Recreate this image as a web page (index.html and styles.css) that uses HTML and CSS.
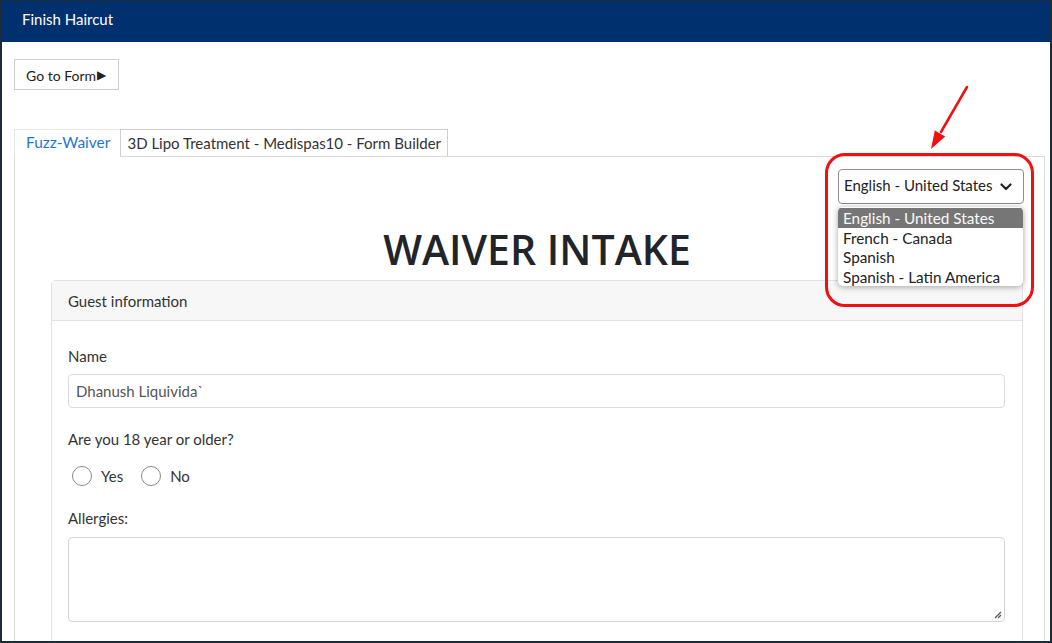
FILE: index.html
```html
<!DOCTYPE html>
<html>
<head>
<meta charset="utf-8">
<link rel="stylesheet" href="styles.css">
</head>
<body>
<div class="frame">
  <header class="topbar">Finish Haircut</header>
  <main class="content">
    <button class="goto">Go to Form<span class="tri">&#9654;</span></button>
    <div class="tabs">
      <div class="tab active">Fuzz-Waiver</div>
      <div class="tab">3D Lipo Treatment - Medispas10 - Form Builder</div>
    </div>
    <section class="panel">
      <div class="lang-row">
        <div class="select">
          <span>English - United States</span>
          <svg class="chev" width="12" height="8" viewBox="0 0 12 8"><path d="M1.5 1.5 L6 6 L10.5 1.5" fill="none" stroke="#222" stroke-width="2.2" stroke-linecap="round" stroke-linejoin="round"/></svg>
        </div>
      </div>
      <ul class="dropdown">
        <li class="sel">English - United States</li>
        <li>French - Canada</li>
        <li>Spanish</li>
        <li>Spanish - Latin America</li>
      </ul>
      <div class="highlight"></div>
      <svg class="arrow" width="44" height="70" viewBox="0 0 44 70">
        <line x1="38" y1="2" x2="12" y2="47" stroke="#f01010" stroke-width="2.5" stroke-linecap="round"/>
        <polygon points="2,64 16.2,51.4 5.8,45.4" fill="#f01010"/>
      </svg>
      <h1 class="title">WAIVER INTAKE</h1>
      <div class="card">
        <div class="card-head">Guest information</div>
        <div class="card-body">
          <label class="lbl">Name</label>
          <div class="input">Dhanush Liquivida`</div>
          <label class="lbl q">Are you 18 year or older?</label>
          <div class="radios">
            <span class="radio"></span><span class="rtext">Yes</span>
            <span class="radio"></span><span class="rtext">No</span>
          </div>
          <label class="lbl q2">Allergies:</label>
          <div class="textarea">
            <svg class="grip" width="9" height="9" viewBox="0 0 9 9"><path d="M8 2 L2 8 M8 5 L5 8" stroke="#555" stroke-width="1.2"/></svg>
          </div>
        </div>
      </div>
    </section>
  </main>
</div>
</body>
</html>
```

FILE: styles.css
```css
* { box-sizing: border-box; }
html, body { margin: 0; padding: 0; }
body {
  font-family: Lato, "Open Sans", sans-serif;
  color: #333;
  background: #fff;
}
.frame {
  width: 1052px;
  height: 643px;
  border: 2px solid #1d2a3a;
  border-top-width: 1px;
  overflow: hidden;
  position: relative;
  display: flex;
  flex-direction: column;
}
.topbar {
  height: 41px;
  background: #01306e;
  color: #fff;
  font-size: 15px;
  padding: 9px 0 0 20px;
  flex: none;
}
.content {
  padding: 17px 5px 0 12px;
  flex: 1;
  display: flex;
  flex-direction: column;
}
.goto {
  align-self: flex-start;
  height: 31px;
  padding: 1px 12px 0 11px;
  background: #fff;
  border: 1px solid #cfcfcf;
  font-family: Lato, sans-serif;
  font-size: 14px;
  color: #222;
  display: flex;
  align-items: center;
  margin: 0;
}
.tri { font-size: 12px; margin-left: 1px; margin-top: -2px; }
.tabs {
  display: flex;
  margin-top: 39px;
  height: 27px;
}
.tab {
  font-size: 15px;
  color: #333;
  padding: 4px 6px 0 6px;
  border: 1px solid #cfcfcf;
  border-bottom: none;
  background: #fff;
  position: relative;
  z-index: 1;
}
.tab.active {
  color: #1e78d2;
  font-size: 15.5px;
  padding: 3px 10px 0 11px;
  border-color: #e6e6e6;
  border-right: none;
  height: 28px;
}
.panel {
  flex: 1;
  border: 1px solid #dadada;
  position: relative;
  padding: 12px 21px 0 36px;
}
.lang-row {
  display: flex;
  justify-content: flex-end;
  margin-right: -1px;
}
.select {
  width: 186px;
  height: 35px;
  border: 1px solid #8e8e8e;
  border-radius: 4px;
  display: flex;
  align-items: center;
  justify-content: space-between;
  padding: 0 11px 3px 5px;
  font-size: 15px;
  color: #222;
}
.chev { margin-top: 3px; }
.dropdown {
  position: absolute;
  left: 823px;
  top: 50px;
  width: 185px;
  margin: 0;
  padding: 1px 0 0 0;
  list-style: none;
  background: #fff;
  border-radius: 5px;
  box-shadow: 0 1px 6px rgba(0,0,0,0.35);
  overflow: hidden;
  font-size: 15.3px;
  color: #222;
}
.dropdown li {
  height: 19.5px;
  line-height: 21px;
  padding-left: 5px;
}
.dropdown li.sel {
  background: #767676;
  color: #fafafa;
}
.highlight {
  position: absolute;
  left: 810px;
  top: -4px;
  width: 209px;
  height: 154px;
  border: 3px solid #f01010;
  border-radius: 20px;
  pointer-events: none;
}
.arrow {
  position: absolute;
  left: 914px;
  top: -72px;
}
.title {
  margin: 20px 0 6px 0;
  text-align: center;
  font-family: "Open Sans", sans-serif;
  font-weight: 600;
  font-size: 41px;
  line-height: 50px;
  color: #212529;
}
.card {
  border: 1px solid #e2e2e2;
  border-radius: 4px 4px 0 0;
}
.card-head {
  height: 40px;
  background: #f7f7f7;
  border-bottom: 1px solid #e2e2e2;
  font-size: 15px;
  color: #333;
  padding: 11px 0 0 16px;
}
.card-body {
  padding: 26px 17px 30px 16px;
  display: flex;
  flex-direction: column;
}
.lbl {
  font-size: 15px;
  color: #333;
  line-height: 18px;
}
.input {
  margin-top: 9px;
  height: 34px;
  border: 1px solid #dcdcdc;
  border-radius: 4px;
  font-size: 15px;
  color: #555;
  padding: 7px 0 0 7px;
}
.q { margin-top: 22px; }
.radios {
  display: flex;
  align-items: center;
  margin-top: 17px;
  height: 22px;
  padding-left: 4px;
}
.radio {
  width: 20px;
  height: 20px;
  border: 1px solid #8a8a8a;
  border-radius: 50%;
  display: inline-block;
}
.rtext {
  font-size: 15px;
  color: #333;
  margin: 0 18px 0 9px;
}
.q2 { margin-top: 22px; }
.textarea {
  margin-top: 10px;
  height: 85px;
  border: 1px solid #d4d4d4;
  border-radius: 4px;
  position: relative;
}
.grip {
  position: absolute;
  right: 2px;
  bottom: 2px;
}
```
